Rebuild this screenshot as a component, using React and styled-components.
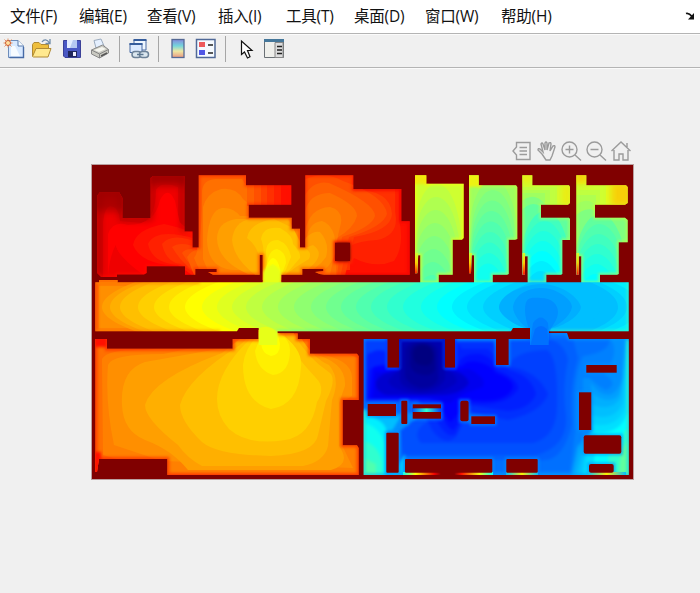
import React from 'react';
import styled, { createGlobalStyle } from 'styled-components';

const GlobalStyle = createGlobalStyle`
  * { box-sizing: border-box; }
  body { margin: 0; background: #f0f0f0; overflow: hidden; }
`;

const Window = styled.main`
  width: 700px;
  height: 593px;
  display: flex;
  flex-direction: column;
  background: #f0f0f0;
  font-family: 'Open Sans', 'Noto Sans CJK SC', sans-serif;
  color: #111;
`;

const MenuBar = styled.nav`
  height: 33px;
  flex: none;
  display: grid;
  grid-template-columns: 69px 68px 71px 68px 68px 71px 76px 184px 15px;
  align-items: center;
  padding-left: 10px;
  background: #fff;
`;

const MenuItem = styled.span`
  font-size: 15.5px;
  line-height: 33px;
  height: 33px;
  white-space: nowrap;
  letter-spacing: -0.2px;
`;

const DockArrow = styled.svg`
  display: block;
  width: 10px;
  height: 10px;
  margin: 0 0 2px 0;
`;

const ToolBar = styled.div`
  height: 35px;
  flex: none;
  display: flex;
  align-items: center;
  padding: 0 0 3px 2px;
  border-top: 1px solid #b4b4b4;
  border-bottom: 1px solid #b4b4b4;
  box-shadow: inset 0 1px #fbfbfb, 0 1px #fafafa;
`;

const ToolButton = styled.span`
  width: ${(p) => p.$w}px;
  height: 24px;
  flex: none;
  display: flex;
  align-items: center;
  justify-content: center;
  svg { display: block; flex: none; }
`;

const Separator = styled.i`
  width: 1px;
  height: 26px;
  flex: none;
  background: #a6a6a6;
`;

const FigureArea = styled.section`
  flex: 1;
  display: flex;
  flex-direction: column;
  padding: 71px 67px 0 91px;
`;

const AxesTools = styled.div`
  height: 25px;
  display: flex;
  justify-content: flex-end;
  gap: 1px;
  svg { display: block; }
`;

const Plot = styled.svg`
  display: block;
  width: 543px;
  height: 316px;
`;

/* ---------- toolbar icons ---------- */
const Icon = ({ w = 22, h = 22, children }) => (
  <svg width={w} height={h} viewBox={`0 0 ${w} ${h}`} fill="none">{children}</svg>
);

const NewIcon = () => (
  <Icon>
    <path d="M5.500 2.500h9.500l5.500 5.500v11.500h-15z" fill="#d8e9ff" stroke="#6d8cba" />
    <path d="M15 2.500v5.500h5.500" fill="#f8fcff" stroke="#5678ad" />
    <path d="M8 8h4l5 10H8z" fill="#fff" opacity=".8" />
    <path d="M20.500 9v10.500h-14" stroke="#466aa5" strokeWidth="1.4" />
    <path d="M5 .5v9M.5 5h9M1.500 1.500l7 7M8.500 1.500l-7 7" stroke="#e09468" />
    <circle cx="5" cy="5" r="2.500" fill="#ffe0a0" stroke="#cf5a30" />
  </Icon>
);
const OpenIcon = () => (
  <Icon>
    <path d="M1.500 18V6.500l1.500-2h5l2 2h7.500v5" fill="#eebe3c" stroke="#b08a34" />
    <path d="M1.500 18.500L5 10.500h15l-3 8.500H2.500z" fill="#ffe98f" stroke="#b08a34" />
    <path d="M11 4c2-3 5-3 7.500 1m.5-4v4.500h-4.500" stroke="#6f8ba9" strokeWidth="1.3" />
  </Icon>
);
const SaveIcon = () => (
  <Icon>
    <path d="M2.500 2.500h17v17H4l-1.500-1.500z" fill="#4a58c4" stroke="#3b4198" />
    <path d="M6 2h10v8H6z" fill="#e3ecff" />
    <path d="M12 2h4v8H9z" fill="#b6c8f2" />
    <path d="M7 13h9v6H7z" fill="#20265c" />
    <path d="M12 14h3v4h-3z" fill="#eef" />
  </Icon>
);
const PrintIcon = () => (
  <Icon>
    <path d="M7 10L5 2.500l7-1.500 3.500 8z" fill="#e5f0ff" stroke="#9babbf" />
    <path d="M2.500 12l11-5 6 4.500V15l-9 5-8-4z" fill="#c9c9c1" stroke="#888" />
    <path d="M2.500 12l8 4 9-4.500M10.500 16v4" stroke="#858585" />
    <path d="M5 12l8-3 4 2-7 3z" fill="#f6f6ef" />
    <path d="M12 18l6-3" stroke="#555" strokeWidth="1.500" />
  </Icon>
);
const LinkIcon = () => (
  <Icon>
    <path d="M6 2h12v10H6z" fill="#eef6ff" stroke="#4a6da5" />
    <path d="M5.500 2h13" stroke="#365d9c" strokeWidth="2" />
    <path d="M2 5.500h12v9H2z" fill="#dceaff" stroke="#4a6da5" />
    <path d="M1.500 6h13" stroke="#365d9c" strokeWidth="2" />
    <rect x="4" y="13.500" width="9" height="6" rx="3" fill="#dbe7ef" stroke="#6c8197" strokeWidth="1.500" />
    <rect x="11.500" y="13.500" width="9" height="6" rx="3" fill="#dbe7ef" stroke="#6c8197" strokeWidth="1.500" />
    <path d="M9 16.500h6.500" stroke="#5b7690" strokeWidth="1.500" />
  </Icon>
);
const ColorbarIcon = () => (
  <Icon w={14} h={22}>
    <defs>
      <linearGradient id="bar" x2="0" y2="1">
        <stop stopColor="#8589dd" /><stop offset=".35" stopColor="#73d5dc" />
        <stop offset=".65" stopColor="#eee8a3" /><stop offset="1" stopColor="#e99981" />
      </linearGradient>
    </defs>
    <rect x="1" y="1.500" width="12" height="18" fill="url(#bar)" stroke="#556994" strokeWidth="1.300" />
  </Icon>
);
const LegendIcon = () => (
  <Icon>
    <path d="M1.500 1.500h18.500v18h-18.500z" fill="#f5faff" stroke="#506997" strokeWidth="1.500" />
    <path d="M4 4h6v5H4z" fill="#ed5a5d" /><path d="M4 12h6v5H4z" fill="#5057e5" />
    <path d="M13 7h5M13 15h5" stroke="#222" strokeWidth="1.500" />
  </Icon>
);
const PointerIcon = () => (
  <Icon w={14} h={22}>
    <path d="M1.500 3v13.500l3-2.500 3 6 2.500-1.200L7.500 12.500h4.500z" fill="#fff" stroke="#111" strokeWidth="1.200" />
  </Icon>
);
const InspectorIcon = () => (
  <Icon>
    <path d="M1.500 1.500h19v18h-19z" fill="#efefeb" stroke="#6a7075" />
    <path d="M1 2.500h20" stroke="#45779a" strokeWidth="3" />
    <path d="M12 4.500h8v15h-8z" fill="#ddd" stroke="#888" />
    <path d="M14 8.500h5M14 12h5M14 15.500h5" stroke="#222" strokeWidth="1.400" />
  </Icon>
);
const ToolGlyph = ({ children }) => (
  <svg width="24" height="24" viewBox="0 0 24 24" fill="none" stroke="#9b9b9b" strokeWidth="1.400">{children}</svg>
);

/* ---------- jet colour levels: 0 (dark blue) to 64 (dark red) ---------- */
const clamp = (x) => Math.max(0, Math.min(1, x));
const jet = (n) => {
  const v = n / 64;
  const c = [3, 2, 1].map((k) => Math.round(255 * clamp(1.5 - Math.abs(4 * v - k))));
  return `rgb(${c.join(',')})`;
};
const Levels = ({ data }) => data.map(([n, d], i) => <path key={i} d={d} fill={jet(n)} />);

/* Contours of the corridor, opening to the east and to the west */
const openRight = (x) => `M${x + 42} 279C${x + 14} 288 ${x} 298 ${x} 307S${x + 14} 325 ${x + 42} 334H640V279Z`;
const openLeft = (x) => `M${x - 36} 279C${x - 10} 288 ${x} 298 ${x} 307S${x - 10} 325 ${x - 36} 334H660V279Z`;
const arch = (cx, top, w) => `M${cx - w} 284C${cx - w} ${top + w * 1.1} ${cx - w * 0.55} ${top} ${cx} ${top}S${cx + w} ${top + w * 1.1} ${cx + w} 284Z`;

const corridorTips = [97, 102, 110, 120, 138, 154, 169, 185, 202, 217, 232, 246, 262, 278, 294, 311, 326, 341, 356, 371, 387, 403, 421, 437, 452, 467, 483, 499];
const corridorLevels = [
  [48, 'M90 275H640V350H90Z'],
  [47, 'M99 286H640V328H99Z'],
  ...corridorTips.slice(1).map((x, i) => [46 - i, openRight(x)]),
];
const corridorEast = [[20, openLeft(600)], [21, openLeft(618)], [22, openLeft(627)], [23, openLeft(640)]];

const northWest = 'M97 273V196L100 192H119L122.5 198V218H150.5V178L153 176H184.5V231.5H192.5V247.5H198.7V175.3H246V185.3H291.3V204.7H248.7V217.7H291.7V228.7H300V247.5H305.3V175.3H353.3V189H401.3V221.3H409.7V274.7H325Q320 275 315 272L323.3 271V269H302.3V274.7H281.3V283H262.7V255H259.7V274.7H213L208 272H216.7V269H195.3V274.7H185V266.3H146.7V273L144 274.5H117V277H101Z';
const corridor = 'M95.3 282.3H99V280H117.5V282.3H628.7V331.3H548.7V345H530V328H513L511 331.3H277.3V345H258.7V328H239L237 331.3H95.3Z';
const southWest = 'M95.3 339H107V348.7H232.7V339H258.7V330H277.3V333.3H297.7V339H310V353.7H357L358.7 356V400H342.7V445.3H357L358.7 448V475H167.3V459H99L97 472H95.3Z';
const southEast = 'M363.7 339H387.3V367.7H399V339H445V367.7H455V339H496V365H508.7V339H530V330H548.7V333H567L569 339H628.7V475H363.7Z';
const cell1 = 'M415 175.3H426.3V183.7H463.7V238L462 239.7H452.7V274.7H438.7V283H420.3V255.3H418.2L417.3 273.3H415Z';
const cell2 = 'M469 175.3H478.7V185.3H516L517.3 187V239L515 239.7H508.7V274L507 274.7H492.7V283H474V255.3H471.6L471 273.3H469Z';
const cell3 = 'M522.3 175.3H532.3V185.3H569L570 187V203L568 204.7H541V217.7H569L570 219V240H562.3V274L561 274.7H546.3V283H527.7V256.3H525V274.7H522.3Z';
const cell4 = 'M576.3 175.3H586.3V185.3H626L627.7 187V203L625 204.7H595V217.7H625L627.7 220V242.3H618.7V274L617 274.7H600V283H581.3V256.3H578.7V274.7H576.3Z';

const northWestLevels = [
  [58, 'M85 165H200V290H85Z'],
  [57, 'M103 277V222Q105 207 110 206Q119 207 120 221L142 223Q156 217 156 190Q161 181 178 187V230H195V276Z'],
  [56, 'M108 275V234Q113 220 128 225Q155 225 160 200Q168 185 175 201L181 228H196V276H145Q119 258 115.700 245Q110 255 108 275Z'],
  [56, 'M116 245Q119 225 154 227Q166 220 163 203Q169 191 172 205Q175 225 196 232V275L158 263Q119 265 116 245Z'],
  [55, 'M133 245Q136 229 164 224Q176 226 196 234V278L180 266Q141 265 133 245Z'],
  [54, 'M148 244Q156 227 196 239V278L178 265Q152 263 148 244Z'],
  [53, 'M162 244Q171 232 197 242V274L180 264Q166 262 162 244Z'],
  [52, 'M172 247Q181 240 200 249V275Q184 267 172 247Z'],
  [51, 'M182 253Q187 246 202 251V273Q190 267 182 253ZM194 165H310V240H194Z'],
  [50, 'M187 257Q192 250 197 250V165H252V183H262V208H250V285H198Z'],
  [49, 'M194 258Q202 248 202 191Q203 180 215 179H242L248 188H262V280H204Z'],
  [48, 'M203 259V207Q207 193 221 189Q236 187 243 199Q251 207 272 216H310V280H212Z'],
  [47, 'M207 240Q209 210 222 208Q233 207 240 216H300V270H236Q208 270 207 240Z'],
  [46, 'M217 239Q217 222 236 219H291V274H248Q218 261 217 239Z'],
  [45, 'M232 240Q234 222 250 219H288L305 250V277H258Q234 260 232 240Z'],
  [50, 'M247 183H258V206H247Z'], [51, 'M254 183H265V206H254Z'],
  [52, 'M261 183H270V206H261Z'], [53, 'M267 183H277V206H267Z'],
  [54, 'M274 183H284V206H274Z'], [55, 'M281 183H296V206H281Z'],
  [55, 'M302 165H415V281H302Z'],
  [54, 'M302 171H399V219Q405 246 394 261Q375 269 354 258L340 280H302Z'],
  [53, 'M303 172H395V212Q400 235 377 240Q359 241 350 246V270H303Z'],
  [52, 'M304 172H352V189Q391 190 392 214Q391 231 354 237L345 276H304Z'],
  [51, 'M304 180Q323 170 343 181Q385 196 387 214Q383 227 349 237L340 278H304Z'],
  [50, 'M304 197Q313 180 329 183Q375 203 375 216Q372 227 342 237L337 276H304Z'],
  [49, 'M305 212Q309 193 330 193Q357 205 357 216Q354 228 337 238L336 275H305Z'],
  [48, 'M305 232Q309 208 330 207Q343 210 341 223Q338 234 336 246L330 275H305Z'],
  [47, 'M305 247Q307 222 322 221Q336 226 336 250Q332 268 316 275H301Z'],
  [46, 'M300 247Q309 230 320 232Q330 243 326 257Q318 269 300 276Z'],
  [45, 'M292 246Q303 250 313 245Q329 256 301 274H280Z'],
  [44, 'M247 238Q249 223 274 219L293 228L302 247Q313 251 309 259L296 267L280 279H260Q264 251 247 238Z'],
  [43, 'M261 239Q263 226 280 228Q293 235 293 244Q301 252 300 258Q291 269 280 280H262Q266 250 261 239Z'],
  [42, 'M266 255Q265 240 278 240Q289 244 291 257Q287 269 280 280H262Q269 264 266 255Z'],
  [41, 'M266 270Q268 249 277 249Q286 252 286 263Q282 272 280 283H262Z'],
  [40, 'M263 283Q266 260 273 258Q281 260 281 283Z'],
  [39, 'M262 284Q269 265 273 264Q280 268 282 284Z'],
];

const southWestLevels = [
  [49, 'M90 320H370V485H90Z'],
  [48, 'M102 359Q107 349 145 350L248 337H302L358 358V474H168L103 455Z'],
  [47, 'M108 365Q111 354 163 354L250 336H298L312 353Q354 358 352 380V396L342 402V445L353 468L162 461L114 445Q105 402 108 365Z'],
  [46, 'M122 405Q120 370 145 362L235 346L252 334H298L311 353Q347 362 345 386L339 403V446Q352 464 331 470H188Q172 450 145 440Q123 431 122 405Z'],
  [45, 'M145 405Q152 379 222 353L245 335H299Q314 359 329 365Q341 379 332 400L328 446Q324 462 303 466H202Q187 458 178 445Q145 419 145 405Z'],
  [44, 'M180 405Q187 378 240 345L254 332H293Q306 357 330 373Q337 380 326 401L318 435Q315 454 271 456Q217 455 202 442Q180 421 180 405Z'],
  [43, 'M217 399Q217 371 250 339L258 332H283Q293 354 316 378Q326 388 317 402Q311 436 285 440Q248 446 229 429Q217 416 217 399Z'],
  [42, 'M243 365Q245 346 261 333H280Q303 349 301 367Q299 405 271 409Q243 402 243 365Z'],
  [41, 'M255 351L262 333H279Q290 340 290 350Q290 373 273 375Q257 370 255 351Z'],
  [40, 'M261 343L264 331H277L280 344Q280 355 271 356Q262 354 261 343Z'],
  [39, 'M259 329H278L275 338Q271 352 266 338Z'],
];

const southEastLevels = [
  [16, 'M350 320H640V485H350Z'],
  [15, 'M352 330H606Q619 351 583 356Q572 377 575 432L570 472H352Z'],
  [14, 'M355 339H573L578 358Q569 387 572 424Q563 463 540 460H400V430Z'],
  [13, 'M355 340H517Q562 330 568 360Q562 387 566 416Q568 447 536 455H403L400 425H355Z'],
  [12, 'M355 342H386L398 364L454 348H494L509 365Q515 351 547 350Q558 356 557 405Q557 437 533 443H421Q407 427 445 414L470 422L494 410V401L355 402Z'],
  [11, 'M367 351H386V370H400V339H454V342H493L509 367Q537 370 548 394Q542 412 508 420L468 412L456 437Q445 447 432 430L418 400H366Z'],
  [10, 'M367 353H386V370H400V339H454L462 349H488L509 370Q531 375 536 394Q530 409 508 411L468 405L456 434Q445 440 435 416L418 400H367Z'],
  [9, 'M371 360L387 355V368H399V339H445V367H457Q460 353 480 354Q495 358 496 370Q518 378 518 389Q507 407 471 403L454 430Q442 428 442 399H367Q367 374 371 360Z'],
  [8, 'M373 366L387 362V368H399V339H445V367L462 366Q468 359 482 363Q493 367 496 373Q513 379 513 387Q507 404 471 400L451 422Q443 418 442 399H369Z'],
  [7, 'M375 372H400V342H445V369L462 370Q470 367 477 374Q486 379 483 387Q459 394 450 403Q442 401 423 398H373Z'],
  [5, 'M376 382Q380 372 399 370V339H445V369Q465 371 469 383Q463 393 443 395H387Q375 392 376 382Z'],
  [4, 'M388 381Q395 372 400 370V339H445V369Q457 374 457 382Q446 393 421 394Q391 391 388 381Z'],
  [3, 'M400 347Q402 341 411 341H441Q445 361 445 379Q439 391 419 391Q401 388 400 380Z'],
  [2, 'M405 350Q407 342 420 342Q437 342 438 351V378Q436 388 421 388Q406 384 405 375Z'],
  [1, 'M410 350Q412 343 423 343Q434 344 435 355V369Q433 376 423 375Q410 373 410 362Z'],
  [0, 'M413 354C413 342 433 342 433 355S425 366 421 365Q413 364 413 354Z'],
  [12, 'M360 335H387V349Q379 354 368 353L362 400H358Z'],
  [10, 'M367 356Q376 347 387 352V365Q372 365 367 372Z'],
  [17, 'M608 335H640V400L583 400V378H590Q596 385 606 390Q620 384 604 374Q622 352 608 335Z'],
  [18, 'M591 383Q600 397 612 394Q624 385 622 370L625 335H640V485H569L577 447L592 429Z'],
  [19, 'M591 392Q606 405 617 397Q625 388 625 335H640V485H571L580 449L592 430Z'],
  [20, 'M591 404Q612 413 621 397L626 345H640V485H574L583 451L592 430Z'],
  [21, 'M591 415Q614 422 623 403L627 353H640V485H579L585 452L592 430Z'],
  [22, 'M591 424Q617 429 625 408L628 360H640V485H583L587 452L592 430Z'],
  [24, 'M596 433Q620 434 627 414H640V485H602L594 462Z'],
  [27, 'M608 456Q621 446 625 430H640V485H612Z'],
  [30, 'M621 450L629 440V480H618Z'],
  [17, 'M355 407L386 414L424 412L400 431L399 480H355Z'],
  [20, 'M355 407L382 416H401L392 431H386V480H355Z'],
  [23, 'M355 410L370 416Q387 422 387 434V480H355Z'],
  [25, 'M355 421Q379 423 385 444V480H355Z'],
  [27, 'M355 440Q378 440 382 463V480H355Z'],
  [29, 'M355 454L376 464V480H355Z'],
  [21, 'M398 465L405 454V480H386V472Z'],
];

const cellLevels = (start, cx, firstTop, step, w, count) =>
  Array.from({ length: count }, (_, i) => [start - i, arch(cx - i * 0.7, firstTop + i * step, w - i * 1.2)]);

const furniture = [
  [335, 242.7, 15, 18.3, 0], [367.7, 404, 28.3, 12, 0], [401.3, 400.7, 6, 23.3, 1],
  [412.7, 404.3, 28.3, 4, 0], [412.7, 412, 28.3, 6.7, 0], [460.3, 400.7, 8.3, 20.6, 2],
  [471.3, 416.3, 23.7, 7.7, 0], [386.3, 432.7, 12.4, 40, 1], [405, 459, 87.3, 13.7, 1],
  [586.3, 365, 30.4, 7.7, 0], [579, 392.3, 12.3, 37.7, 0], [583.7, 435.3, 37.6, 18.4, 2],
  [506.3, 459, 31.4, 13.7, 1], [589, 464, 24.7, 8.7, 2],
];

const Room = ({ id, outline, edge, glow = 3, opacity = 0.6, blend = 'blend1', levels, children }) => (
  <g clipPath={`url(#${id})`}>
    <clipPath id={id}><path d={outline} /></clipPath>
    <g filter={`url(#${blend})`}><Levels data={levels} /></g>
    <path d={outline} fill="none" stroke={jet(edge)} strokeWidth={glow} opacity={opacity} filter="url(#soft)" />
    {children}
  </g>
);

const Sliver = ({ x }) => <rect x={x} y="253" width="2.8" height="22" fill="url(#sliver)" />;

const HeatMap = () => (
  <Plot viewBox="91 164 543 316">
    <defs>
      <filter id="blend1" x="-5%" y="-5%" width="110%" height="110%" colorInterpolationFilters="sRGB"><feGaussianBlur stdDeviation=".7" /></filter>
      <filter id="blend2" x="-5%" y="-5%" width="110%" height="110%" colorInterpolationFilters="sRGB"><feGaussianBlur stdDeviation="1.7" /></filter>
      <filter id="soft" filterUnits="userSpaceOnUse" x="80" y="150" width="570" height="340" colorInterpolationFilters="sRGB"><feGaussianBlur stdDeviation="1.5" /></filter>
      <filter id="wide" filterUnits="userSpaceOnUse" x="80" y="150" width="570" height="340" colorInterpolationFilters="sRGB"><feGaussianBlur stdDeviation="3.5" /></filter>
      <linearGradient id="sliver" x2="0" y2="1">
        <stop stopColor={jet(37)} /><stop offset=".45" stopColor={jet(43)} /><stop offset="1" stopColor={jet(55)} />
      </linearGradient>
      <linearGradient id="strip">
        <stop stopColor={jet(25)} /><stop offset=".14" stopColor={jet(40)} /><stop offset=".35" stopColor={jet(57)} />
        <stop offset=".42" stopColor={jet(64)} /><stop offset=".57" stopColor={jet(64)} />
        <stop offset=".65" stopColor={jet(55)} /><stop offset=".85" stopColor={jet(39)} /><stop offset="1" stopColor={jet(24)} />
      </linearGradient>
      <linearGradient id="shortStrip">
        <stop stopColor={jet(20)} /><stop offset=".5" stopColor={jet(41)} /><stop offset="1" stopColor={jet(20)} />
      </linearGradient>
      <linearGradient id="slot">
        <stop stopColor={jet(13)} /><stop offset=".5" stopColor={jet(27)} /><stop offset="1" stopColor={jet(12)} />
      </linearGradient>
    </defs>
    <path d="M91 164H634V480H91Z" fill="#b9a0a0" />
    <path d="M92 165H633V479H92Z" fill="#800000" />

    <Room id="nw" outline={northWest} edge={55} glow={3} opacity={0.5} levels={northWestLevels}>
      <path d="M98 275V192H122V218H150V176H184V231" fill="none" stroke="#900000" strokeWidth="5" opacity=".7" filter="url(#wide)" />
      <path d="M94 186H127V211H94ZM149 170H189V186H149Z" fill="#900000" opacity=".65" filter="url(#wide)" />
      <path d="M353 189H401V221H409V275H345" fill="none" stroke={jet(57)} strokeWidth="3" opacity=".7" filter="url(#soft)" />
      <path d="M335 242H351V262H335Z" stroke={jet(54)} strokeWidth="3" filter="url(#soft)" />
      <path d="M281 286H263V272L268 266H276L281 271Z" fill={jet(38.5)} filter="url(#soft)" />
    </Room>
    <Room id="sw" outline={southWest} edge={54} glow={4} opacity={0.65} levels={southWestLevels}>
      <path d="M258 328H278V339H258Z" fill={jet(39)} filter="url(#soft)" />
      <path d="M94 337H107V347H94ZM94 452H101V476H94Z" fill={jet(55)} filter="url(#soft)" />
    </Room>
    <Room id="se" outline={southEast} edge={18} glow={2.5} opacity={0.7} blend="blend2" levels={southEastLevels}>
      <path d="M387 339V368H399M445 368H455V339" fill="none" stroke={jet(9)} strokeWidth="2" filter="url(#soft)" />
      <path d="M399 368V339H445V368" fill="none" stroke={jet(4)} strokeWidth="3" filter="url(#soft)" />
      <g fill="none" stroke={jet(17)} strokeWidth="3" opacity=".7" filter="url(#soft)">
        {furniture.slice(1).map(([x, y, w, h], i) => <rect key={i} x={x} y={y} width={w} height={h} />)}
      </g>
      <path d="M628 340V475M364 410V475" stroke={jet(28)} strokeWidth="2" filter="url(#soft)" />
      <rect x="403" y="472" width="90" height="4" fill="url(#strip)" />
      <rect x="506" y="472" width="32" height="4" fill="url(#shortStrip)" />
      <rect x="587" y="472" width="39" height="4" fill="url(#shortStrip)" />
      <rect x="412" y="408" width="29" height="4" fill="url(#slot)" />
      <path d="M528 328H550V340H528Z" fill={jet(14)} filter="url(#soft)" />
    </Room>

    <Room id="c1" outline={cell1} edge={40} levels={[[37, 'M405 165H475V295H405Z'], ...cellLevels(36, 437, 184, 13, 27, 8)]}>
      <path d="M413 174H428V184H413Z" fill={jet(42)} opacity=".7" filter="url(#soft)" />
      <Sliver x={415} />
    </Room>
    <Room id="c2" outline={cell2} edge={37} levels={[[34, 'M460 165H528V295H460Z'], [33, arch(493, 180, 28)], ...cellLevels(32, 493, 190, 10.5, 26, 8)]}>
      <path d="M467 173H481V187H467Z" fill={jet(41)} opacity=".8" filter="url(#soft)" />
      <Sliver x={469} />
    </Room>
    <Room id="c3" outline={cell3} edge={36} levels={[[37, 'M512 165H582V295H512Z'], [36, 'M512 187H557V205H582V295H512Z'], [35, 'M512 190H550V205H582V295H512Z'], [34, 'M512 193H545V208H582V295H512Z'], [32, 'M520 203Q533 190 545 204L577 212V285H520Z'], [30, 'M520 212Q533 197 545 210L577 215V285H520Z'], ...cellLevels(28, 545, 211, 10, 27, 7)]}>
      <path d="M561 183H573V207H561ZM520 171H534V183H520Z" fill={jet(42)} opacity=".6" filter="url(#wide)" />
      <Sliver x={522.3} />
    </Room>
    <Room id="c4" outline={cell4} edge={37} levels={[[38, 'M566 165H638V295H566Z'], [37, 'M566 184H606V206H638V295H566Z'], [36, 'M566 190H600V206H638V295H566Z'], [35, 'M566 195H596V210H638V295H566Z'], [34, 'M574 207Q588 193 600 210L638 215V285H574Z'], [32, 'M574 217Q588 203 600 214L631 219V285H574Z'], ...cellLevels(30, 600, 214, 10, 28, 7)]}>
      <path d="M611 181H632V207H611ZM574 171H588V183H574Z" fill={jet(44)} opacity=".75" filter="url(#wide)" />
      <Sliver x={576.3} />
    </Room>

    <g clipPath="url(#hall)">
      <clipPath id="hall"><path d={corridor} /></clipPath>
      <g filter="url(#blend1)">
        <Levels data={corridorLevels} />
        <path d="M550 279Q581 296 581 307T550 334H650V279Z" fill={jet(20)} />
        <Levels data={corridorEast} />
        <path d="M499 307C501 293 525 284 543 284C563 285 579 298 581 307C580 316 564 326 550 329V350H528V329C513 325 499 314 499 307Z" fill={jet(19)} />
        <path d="M513 307C515 293 530 288 542 288C556 288 572 299 572 307C570 318 557 325 550 329V350H528V329C520 323 513 314 513 307Z" fill={jet(18)} />
        <path d="M525 310C525 295 533 298 541 298C551 298 558 304 558 312C558 320 552 325 550 331V350H529V329C527 323 525 317 525 310Z" fill={jet(17)} />
        <path d="M529 350L533 323Q541 312 548 323L550 350Z" fill={jet(16)} />
        <path d="M529 350L535 329Q541 323 547 329L550 350Z" fill={jet(15)} />
        <path d="M258 329Q268 323 278 333V350H258Z" fill={jet(38.5)} />
      </g>
      <path d="M96 283V331" stroke={jet(51)} strokeWidth="4" filter="url(#soft)" />
      <path d="M97 281H118" stroke={jet(49)} strokeWidth="2" />
      <path d="M97 283H200M97 331H220" stroke={jet(49)} strokeWidth="2" opacity=".6" filter="url(#soft)" />
      <path d="M277 331H510M550 331H628V282" fill="none" stroke={jet(29)} strokeWidth="2" opacity=".7" filter="url(#soft)" />
    </g>

    {furniture.map(([x, y, w, h, r], i) => <rect key={i} x={x} y={y} width={w} height={h} rx={r} fill="#800000" />)}
  </Plot>
);

const menus = ['文件(F)', '编辑(E)', '查看(V)', '插入(I)', '工具(T)', '桌面(D)', '窗口(W)', '帮助(H)'];

export default function App() {
  return (
    <Window>
      <GlobalStyle />
      <MenuBar>
        {menus.map((m) => <MenuItem key={m}>{m}</MenuItem>)}
        <DockArrow viewBox="0 0 10 10">
          <path d="M1 2.500q3-1 6 3" fill="none" stroke="#111" strokeWidth="1.800" />
          <path d="M9 2v6.500H3z" fill="#111" />
        </DockArrow>
      </MenuBar>
      <ToolBar>
        <ToolButton $w={23}><NewIcon /></ToolButton>
        <ToolButton $w={33}><OpenIcon /></ToolButton>
        <ToolButton $w={27}><SaveIcon /></ToolButton>
        <ToolButton $w={29}><PrintIcon /></ToolButton>
        <ToolButton $w={5} />
        <Separator />
        <ToolButton $w={38}><LinkIcon /></ToolButton>
        <Separator />
        <ToolButton $w={37}><ColorbarIcon /></ToolButton>
        <ToolButton $w={20}><LegendIcon /></ToolButton>
        <ToolButton $w={9} />
        <Separator />
        <ToolButton $w={41}><PointerIcon /></ToolButton>
        <ToolButton $w={14}><InspectorIcon /></ToolButton>
      </ToolBar>
      <FigureArea>
        <AxesTools>
          <ToolGlyph><path d="M7.500 3.500h13.500v17h-13.500V16L4 12l3.500-4zM10.500 8.500h7.500M10.500 12h7.500M10.500 15.500h7.500" /></ToolGlyph>
          <ToolGlyph><path d="M8 15L4 11q0-2 2-1l3 3L7 5q1-2 2 0l2 6V4q1-2 2 0v7l2-7q2-1 2 1l-1 7 3-5q2-1 2 1l-3 9-2 4h-4z" /></ToolGlyph>
          <ToolGlyph><circle cx="10.500" cy="10.500" r="7.500" /><path d="M16 16l6 5.500M6.500 10.500h8M10.500 6.500v8" /></ToolGlyph>
          <ToolGlyph><circle cx="10.500" cy="10.500" r="7.500" /><path d="M16 16l6 5.500M6.500 10.500h8" /></ToolGlyph>
          <ToolGlyph><path d="M2.500 12L12 3l9.500 9M5 11v10h5v-6h4v6h5V11M18 8V4" /></ToolGlyph>
        </AxesTools>
        <HeatMap />
      </FigureArea>
    </Window>
  );
}
